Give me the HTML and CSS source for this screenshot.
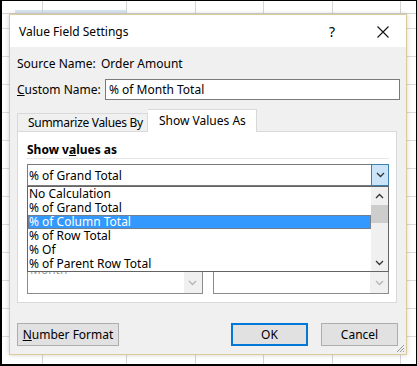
FILE: index.html
```html
<!DOCTYPE html>
<html>
<head>
<meta charset="utf-8">
<link rel="stylesheet" href="styles.css">
</head>
<body>
<div class="screen">
  <div class="dialog">
    <div class="titlebar">
      <span class="title">Value Field Settings</span>
      <span class="help">?</span>
      <span class="close"><svg width="12" height="12" viewBox="0 0 12 12"><path d="M0.5 0.5L11.5 11.5M11.5 0.5L0.5 11.5" stroke="#111" stroke-width="1.1" fill="none"/></svg></span>
    </div>
    <div class="body">
      <div class="source"><span class="lbl-src">Source Name:</span><span>Order Amount</span></div>
      <div class="custom"><span class="lbl-cust"><u>C</u>ustom Name:</span><div class="input">% of Month Total</div></div>
      <div class="tabs">
        <div class="tab summarize">Summarize Values By</div>
        <div class="tab active">Show Values As</div>
      </div>
      <div class="panel">
        <div class="group-title">Show v<u>a</u>lues as</div>
        <div class="combo-wrap">
          <div class="combo">
            <span class="combo-text">% of Grand Total</span>
            <span class="cbtn"><svg width="9" height="6" viewBox="0 0 9 6"><path d="M1 1L4.5 4.5L8 1" stroke="#333" stroke-width="1.3" fill="none"/></svg></span>
          </div>
          <div class="dropdown">
            <div class="items">
              <div class="item">No Calculation</div>
              <div class="item">% of Grand Total</div>
              <div class="item selected">% of Column Total</div>
              <div class="item">% of Row Total</div>
              <div class="item">% Of</div>
              <div class="item">% of Parent Row Total</div>
            </div>
            <div class="scrollbar">
              <span class="sarrow"><svg width="9" height="6" viewBox="0 0 9 6"><path d="M1 5L4.5 1.5L8 5" stroke="#333" stroke-width="1.3" fill="none"/></svg></span>
              <span class="thumb"></span>
              <span class="sarrow bottom"><svg width="9" height="6" viewBox="0 0 9 6"><path d="M1 1L4.5 4.5L8 1" stroke="#333" stroke-width="1.3" fill="none"/></svg></span>
            </div>
          </div>
        </div>
        <div class="base">
          <div class="listbox wide1">
            <div class="lb-items"><div class="lb-item">Month</div></div>
            <div class="lb-scroll"><svg width="9" height="6" viewBox="0 0 9 6"><path d="M1 1L4.5 4.5L8 1" stroke="#b5b5b5" stroke-width="1.3" fill="none"/></svg></div>
          </div>
          <div class="listbox wide2">
            <div class="lb-items"></div>
            <div class="lb-scroll"><svg width="9" height="6" viewBox="0 0 9 6"><path d="M1 1L4.5 4.5L8 1" stroke="#b5b5b5" stroke-width="1.3" fill="none"/></svg></div>
          </div>
        </div>
      </div>
      <div class="buttons">
        <div class="btn numfmt"><u>N</u>umber Format</div>
        <div class="spacer"></div>
        <div class="btn ok">OK</div>
        <div class="btn cancel">Cancel</div>
      </div>
    </div>
    <svg class="grip" width="9" height="9" viewBox="0 0 9 9"><path d="M8 1L1 8M8 4L4 8M8 7L7 8" stroke="#9a9a9a" stroke-width="1" fill="none"/></svg>
  </div>
</div>
</body>
</html>
```

FILE: styles.css
```css
* { box-sizing: border-box; }
html, body { margin: 0; padding: 0; }
body {
  width: 417px;
  height: 366px;
  overflow: hidden;
  background: #000;
  font-family: "Noto Sans", "Open Sans", sans-serif;
  font-size: 12px;
  color: #000;
}
.screen {
  width: 417px;
  height: 366px;
  border-style: solid;
  border-color: #000;
  border-width: 1px 1px 2px 2px;
  background-color: #fff;
  background-image:
    linear-gradient(#d4d4d4, #d4d4d4),
    linear-gradient(#d4d4d4, #d4d4d4),
    linear-gradient(#d4d4d4, #d4d4d4),
    linear-gradient(#d4d4d4, #d4d4d4),
    linear-gradient(#d4d4d4, #d4d4d4),
    linear-gradient(#d4d4d4, #d4d4d4),
    linear-gradient(#d4d4d4, #d4d4d4),
    linear-gradient(#dbe6f2, #dbe6f2),
    repeating-linear-gradient(to bottom, transparent 0 27px, #dcdcdc 27px 28px);
  background-size: 1px 100%, 1px 100%, 1px 100%, 1px 100%, 1px 100%, 1px 100%, 100% 1px, 111px 3px, 100% 100%;
  background-position: 40px 0, 124px 0, 193px 0, 261px 0, 330px 0, 398px 0, 0 12px, 13px 9px, 0 0;
  background-repeat: no-repeat;
  padding: 13px 0 0 7px;
  overflow: hidden;
}
.dialog {
  position: relative;
  width: 398px;
  height: 341px;
  border: 1px solid #dccb9a;
  background: #f0f0f0;
  display: flex;
  flex-direction: column;
  box-shadow: 0 0 5px rgba(0, 0, 0, 0.18);
}
.titlebar {
  height: 32px;
  background: #fff;
  display: flex;
  align-items: center;
  padding-left: 9px;
  padding-top: 1px;
}
.title { flex: 1; font-size: 12px; }
.help { width: 46px; text-align: center; font-size: 14px; }
.close { width: 46px; margin-left: 5px; display: flex; justify-content: center; }
.body {
  flex: 1;
  padding: 8px 6px 0 7px;
  display: flex;
  flex-direction: column;
}
.source { height: 16px; display: flex; align-items: center; }
.lbl-src { width: 84px; }
.custom { margin-top: 8px; height: 21px; display: flex; align-items: center; }
.lbl-cust { width: 88px; }
.input {
  flex: 1;
  height: 21px;
  border: 1px solid #7a7a7a;
  background: #fff;
  padding-left: 3px;
  line-height: 19px;
}
.tabs {
  display: flex;
  align-items: flex-end;
  height: 23px;
  margin-top: 9px;
  margin-bottom: -1px;
  position: relative;
  z-index: 1;
}
.tab {
  width: 131px;
  height: 18px;
  margin-bottom: 1px;
  border: 1px solid #d9d9d9;
  border-bottom: none;
  background: #f0f0f0;
  padding-left: 10px;
  line-height: 17px;
  white-space: nowrap;
}
.tab.summarize { letter-spacing: -0.3px; }
.tab.active {
  width: 109px;
  height: 23px;
  margin-bottom: 0;
  background: #fff;
  padding: 3px 0 0 11px;
  line-height: 16px;
  border-left: none;
}
.panel {
  width: 380px;
  height: 172px;
  border: 1px solid #d9d9d9;
  background: #fff;
  padding: 10px 7px 8px 9px;
  display: flex;
  flex-direction: column;
}
.group-title {
  font-weight: bold;
  line-height: 16px;
  border-bottom: 1px solid #e6e6e6;
}
.combo-wrap { position: relative; margin-top: 5px; }
.combo {
  height: 22px;
  border: 1px solid #7a7a7a;
  display: flex;
  align-items: center;
  background: #fff;
}
.combo-text { flex: 1; padding-left: 1px; }
.cbtn {
  width: 18px;
  height: 22px;
  margin: -1px -1px -1px 0;
  background: #cce4f7;
  border: 1px solid #3c7fb1;
  display: flex;
  align-items: center;
  justify-content: center;
}
.dropdown {
  position: absolute;
  top: 22px;
  left: 0;
  width: 362px;
  height: 86px;
  border: 1px solid #646464;
  background: #fff;
  display: flex;
  z-index: 2;
}
.items { flex: 1; }
.item { height: 14px; line-height: 14px; padding-left: 1px; white-space: nowrap; }
.item.selected {
  background: #3399ff;
  color: #fff;
  box-shadow: inset 0 0 0 1px #6f7f90;
}
.scrollbar {
  width: 17px;
  background: #f0f0f0;
  display: flex;
  flex-direction: column;
  align-items: center;
}
.sarrow { height: 17px; width: 17px; display: flex; align-items: center; justify-content: center; }
.sarrow.bottom { margin-top: auto; }
.thumb { width: 17px; height: 18px; margin-top: 1px; background: #cdcdcd; }
.base { margin-top: auto; display: flex; gap: 10px; }
.listbox {
  height: 88px;
  border: 1px solid #8c8c8c;
  display: flex;
  background: #fff;
}
.wide1 { width: 176px; }
.wide2 { width: 177px; }
.lb-items {
  flex: 1;
  display: flex;
  flex-direction: column;
  justify-content: flex-end;
  padding-bottom: 16px;
}
.lb-item { height: 14px; line-height: 14px; padding-left: 2px; color: #9a9a9a; }
.lb-scroll {
  width: 18px;
  background: #f0f0f0;
  display: flex;
  align-items: flex-end;
  justify-content: center;
  padding-bottom: 7px;
}
.buttons {
  margin-top: 20px;
  height: 23px;
  display: flex;
  padding-right: 2px;
}
.spacer { flex: 1; }
.btn {
  height: 23px;
  border: 1px solid #adadad;
  background: #e1e1e1;
  text-align: center;
  line-height: 21px;
}
.numfmt { width: 102px; }
.ok { width: 77px; border-color: #0078d7; box-shadow: inset 0 0 0 1px #0078d7; }
.cancel { width: 77px; margin-left: 13px; }
.grip { position: absolute; right: 1px; bottom: 1px; }
```
